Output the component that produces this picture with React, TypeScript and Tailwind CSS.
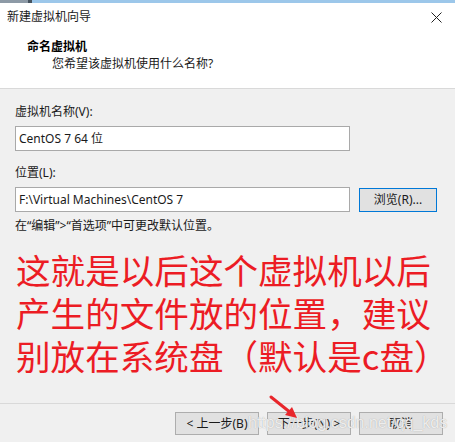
import React from "react";

const ui = "font-['Noto_Sans','Noto_Sans_CJK_SC',sans-serif]";

function WinButton({ label, className = "" }: { label: string; className?: string }) {
  return (
    <div
      className={`h-[23px] flex items-center justify-center border border-[#adadad] bg-[#e1e1e1] text-[12px] text-[#1a1a1a] ${className}`}
    >
      {label}
    </div>
  );
}

export default function App() {
  return (
    <div className={`relative w-[455px] h-[442px] overflow-hidden bg-[#f0f0f0] flex flex-col ${ui}`}>
      {/* strip of the window behind */}
      <div className="h-[3px] flex">
        <div className="w-[28px] bg-[#8d9aa6]" />
        <div className="w-[4px] bg-[#46525e]" />
        <div className="flex-1 bg-[#9cc7ea]" />
      </div>

      {/* white header */}
      <div className="bg-white flex flex-col h-[86px] border-b border-[#d9d9d9]">
        <div className="h-[28px] flex items-center justify-between pl-[7px] pr-[13px]">
          <span className="text-[12px] text-[#1a1a1a] leading-none">新建虚拟机向导</span>
          <svg width="11" height="11" viewBox="0 0 11 11">
            <path d="M0.5 0.5 L10.5 10.5 M10.5 0.5 L0.5 10.5" stroke="#222" strokeWidth="1" />
          </svg>
        </div>
        <div className="mt-[8px] pl-[27px] text-[12px] font-bold leading-[16px] text-black">命名虚拟机</div>
        <div className="mt-[1px] pl-[52px] text-[12px] leading-[16px] text-[#1a1a1a]">您希望该虚拟机使用什么名称?</div>
      </div>

      {/* body */}
      <div className="flex flex-col pl-[15px] pt-[15px] text-[12px] text-[#1a1a1a]">
        <div className="leading-[16px]">虚拟机名称(V):</div>
        <div className="mt-[6px] w-[335px] h-[25px] border border-[#a9a9a9] bg-white flex items-center px-[3px]">
          CentOS 7 64 位
        </div>
        <div className="mt-[14px] leading-[16px]">位置(L):</div>
        <div className="mt-[6px] flex items-center gap-[9px]">
          <div className="w-[335px] h-[25px] border border-[#a9a9a9] bg-white flex items-center px-[3px]">
            F:\Virtual Machines\CentOS 7
          </div>
          <div className="w-[78px] h-[24px] flex items-center justify-center border border-[#0078d7] bg-[#e1e1e1]">
            浏览(R)...
          </div>
        </div>
        <div className="mt-[6px] leading-[16px]">在“编辑”&gt;“首选项”中可更改默认位置。</div>
      </div>

      {/* red annotation */}
      <div className="mt-[14px] pl-[16px] text-[34.6px] leading-[43px] text-[#ec1c24] font-['Noto_Sans_CJK_SC',sans-serif]">
        <div>这就是以后这个虚拟机以后</div>
        <div>产生的文件放的位置，建议</div>
        <div>别放在系统盘（默认是c盘）</div>
      </div>

      {/* footer */}
      <div className="mt-auto border-t border-[#d9d9d9] h-[39px] flex justify-end items-start pt-[8px] pr-[12px] gap-[8px]">
        <WinButton label="< 上一步(B)" className="w-[84px]" />
        <WinButton label="下一步(N) >" className="w-[84px]" />
        <WinButton label="取消" className="w-[84px]" />
      </div>

      {/* watermark */}
      <div className="absolute left-[248px] top-[413px] text-[16px] leading-[20px] text-white/80 font-['Liberation_Sans',sans-serif] [text-shadow:0_0_1px_#9a9a9a]">
        https://blog.csdn.net/qq_kds
      </div>

      {/* arrow */}
      <svg className="absolute left-[264px] top-[392px]" width="40" height="32" viewBox="0 0 40 32">
        <path d="M7 5 L27 21" stroke="#e8262b" strokeWidth="3" strokeLinecap="round" />
        <path d="M33 26 L21 23 L28 15 Z" fill="#e8262b" />
      </svg>
    </div>
  );
}
